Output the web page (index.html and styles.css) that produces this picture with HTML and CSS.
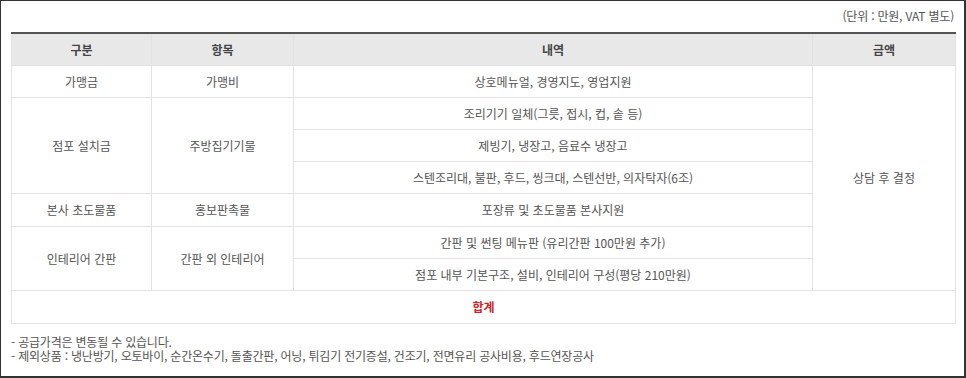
FILE: index.html
```html
<!DOCTYPE html>
<html lang="ko">
<head>
<meta charset="utf-8">
<link rel="stylesheet" href="styles.css">
</head>
<body>
<div class="frame">
  <p class="unit">(단위 : 만원, VAT 별도)</p>
  <table class="cost">
    <colgroup>
      <col class="c1"><col class="c2"><col class="c3"><col class="c4">
    </colgroup>
    <thead>
      <tr><th>구분</th><th>항목</th><th>내역</th><th>금액</th></tr>
    </thead>
    <tbody>
      <tr><td>가맹금</td><td>가맹비</td><td>상호메뉴얼, 경영지도, 영업지원</td><td rowspan="8">상담 후 결정</td></tr>
      <tr><td rowspan="3">점포 설치금</td><td rowspan="3">주방집기기물</td><td>조리기기 일체(그릇, 접시, 컵, 솥 등)</td></tr>
      <tr><td>제빙기, 냉장고, 음료수 냉장고</td></tr>
      <tr><td>스텐조리대, 불판, 후드, 씽크대, 스텐선반, 의자탁자(6조)</td></tr>
      <tr class="tall"><td>본사 초도물품</td><td>홍보판촉물</td><td>포장류 및 초도물품 본사지원</td></tr>
      <tr><td rowspan="2">인테리어 간판</td><td rowspan="2">간판 외 인테리어</td><td>간판 및 썬팅 메뉴판 (유리간판 100만원 추가)</td></tr>
      <tr><td>점포 내부 기본구조, 설비, 인테리어 구성(평당 210만원)</td></tr>
    </tbody>
    <tfoot>
      <tr><td colspan="4" class="total">합계</td></tr>
    </tfoot>
  </table>
  <ul class="notes">
    <li>- 공급가격은 변동될 수 있습니다.</li>
    <li>- 제외상품 : 냉난방기, 오토바이, 순간온수기, 돌출간판, 어닝, 튀김기 전기증설, 건조기, 전면유리 공사비용, 후드연장공사</li>
  </ul>
</div>
</body>
</html>
```
FILE: styles.css
```css
* { box-sizing: border-box; }
html, body { margin: 0; padding: 0; background: #fff; }
body {
  font-family: "Noto Sans CJK KR", "Noto Sans", sans-serif;
  font-size: 12px;
  color: #555;
}
.frame {
  width: 966px;
  height: 378px;
  border: 1px solid #333;
  border-right-width: 2px;
  border-bottom-width: 2px;
  padding: 6px 10px 0 10px;
}
.unit {
  margin: 0 0 7px 0;
  height: 18px;
  line-height: 18px;
  text-align: right;
  letter-spacing: -0.2px;
}
.cost {
  width: 944px;
  border-collapse: collapse;
  table-layout: fixed;
  border-top: 2px solid #555;
}
.c1 { width: 140px; }
.c2 { width: 142px; }
.c3 { width: 519px; }
.c4 { width: 143px; }
.cost th, .cost td {
  border: 1px solid #e2e2e2;
  height: 32px;
  padding: 0;
  text-align: center;
  vertical-align: middle;
  font-weight: normal;
}
.cost tr.tall td { height: 33px; }
.cost th {
  background: #e8e8e8;
  color: #444;
  font-weight: bold;
  border-top: none;
}
.cost td.total {
  color: #c8282a;
  font-weight: bold;
  height: 33px;
}
.notes {
  list-style: none;
  margin: 11px 0 0 0;
  padding: 0;
  line-height: 14px;
  letter-spacing: -0.2px;
}
```
